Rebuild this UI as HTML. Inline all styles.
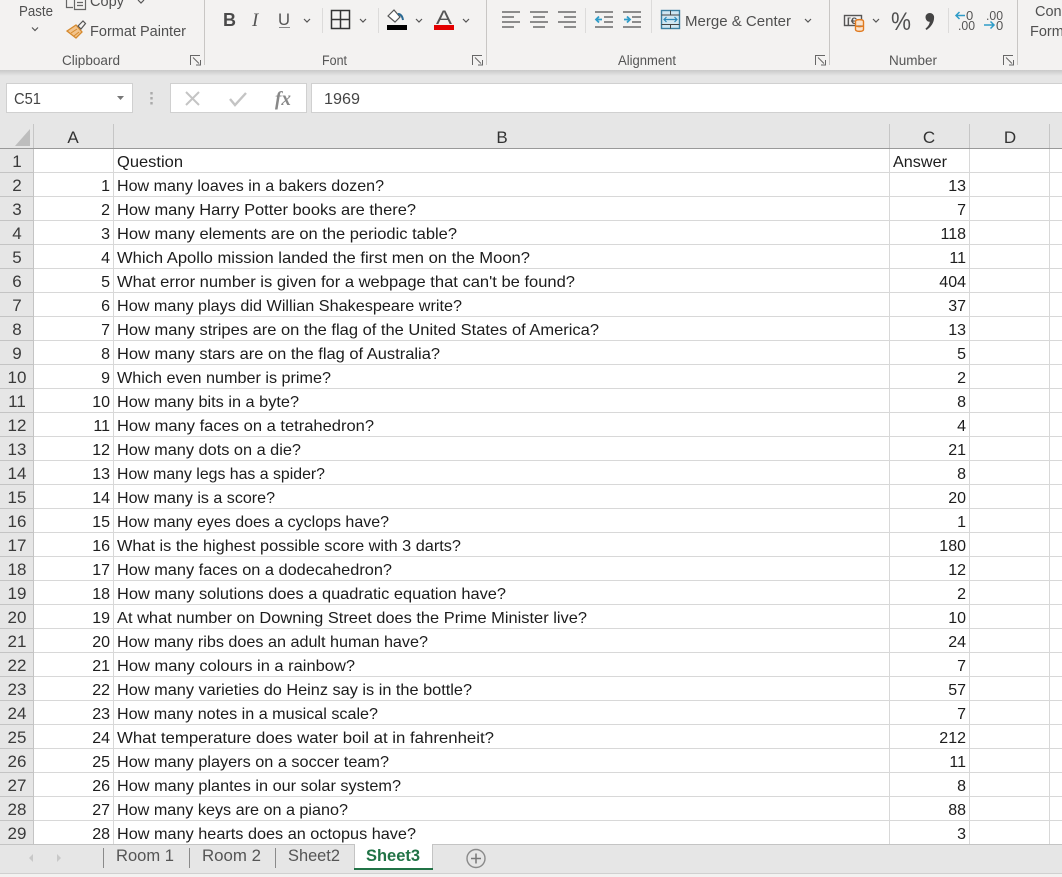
<!DOCTYPE html>
<html><head><meta charset="utf-8"><style>
html,body{margin:0;padding:0;background:#e6e6e6;width:1062px;height:877px;overflow:hidden}
svg{display:block}
text{font-family:"Liberation Sans",sans-serif;font-size:16px;fill:#1c1c1c}
.r text{fill:#3a3a3a;font-size:17px}
.a text{text-anchor:end}
.h text{text-anchor:middle;fill:#333}
.rib{font-size:14.5px;fill:#505050}
.lbl{font-size:13.5px;fill:#555}
.tab{font-size:17px;fill:#555}
.ch{fill:none;stroke:#555;stroke-width:1.2}
</style></head><body>
<svg width="1062" height="877" viewBox="0 0 1062 877" xmlns="http://www.w3.org/2000/svg">
<defs><linearGradient id="sh" x1="0" y1="0" x2="0" y2="1"><stop offset="0" stop-color="#c9c9c9"/><stop offset="1" stop-color="#e6e6e6"/></linearGradient></defs>
<rect width="1062" height="877" fill="#e6e6e6"/>
<rect width="1062" height="70" fill="#f3f2f1"/>
<rect y="70" width="1062" height="6" fill="url(#sh)"/>

<!-- dividers -->
<g stroke="#c8c6c4" fill="none">
<path d="M204.5 0V65M486.5 0V65M829.5 0V65M1017.5 0V65"/>
<path d="M322.5 8V33M378.5 8V33M585.5 8V33M651.5 0V33M948.5 8V33" stroke="#dcdbda"/>
</g>

<!-- Clipboard -->
<text class="rib" x="19" y="16" textLength="34" lengthAdjust="spacingAndGlyphs">Paste</text>
<path class="ch" d="M32 27.5l3 3 3-3"/>
<path d="M66.5 0V7.5H73M74.5 0V9.5H85.5V0M77 2.5h6M77 5.5h6" fill="none" stroke="#666" stroke-width="1.2"/>
<text class="rib" x="90" y="6" textLength="34" lengthAdjust="spacingAndGlyphs">Copy</text>
<path class="ch" d="M138 0l3 3 3-3"/>
<path d="M67 31l9-6 6 7-6 6z" fill="#f2c48d" stroke="#d68a2e" stroke-width="1.3"/>
<path d="M71 33l6-4M74 36l5-4" stroke="#d68a2e" fill="none"/>
<path d="M78 26l5-5 2.500 2.500-4.500 5.500z" fill="#f3f2f1" stroke="#555" stroke-width="1.2"/>
<text class="rib" x="90" y="36" textLength="96" lengthAdjust="spacingAndGlyphs">Format Painter</text>
<text class="lbl" x="62" y="65" textLength="58" lengthAdjust="spacingAndGlyphs">Clipboard</text>
<path id="lau" d="M190.500 65V55.500H200M196 65H200.500V60M193 57.500l6 6" fill="none" stroke="#666"/>

<!-- Font -->
<text x="223" y="26" style="font-size:18px;font-weight:bold;fill:#4a4a4a">B</text>
<text x="252" y="26" style="font-family:'Liberation Serif',serif;font-size:19px;font-style:italic;fill:#555">I</text>
<text x="278" y="25" style="font-size:17px;fill:#555" textLength="12" lengthAdjust="spacingAndGlyphs">U</text>
<path d="M279 27.500h11" stroke="#888" fill="none"/>
<path class="ch" d="M304 19l3 3 3-3M360 19l3 3 3-3M416 19l3 3 3-3M463 19l3 3 3-3"/>
<path d="M331.500 10.500h18v18h-18zM340.500 10.500v18M331.500 19.500h18" fill="none" stroke="#333" stroke-width="1.500"/>
<path d="M388 16l6-6 6 7-5 5z" fill="#fff" stroke="#555" stroke-width="1.200"/>
<path d="M398 14q4 0 5 6" stroke="#2b6a94" stroke-width="2" fill="none"/>
<rect x="387" y="25" width="20" height="5" fill="#000"/>
<text x="436" y="24" style="font-size:19px;fill:#555" textLength="16" lengthAdjust="spacingAndGlyphs">A</text>
<rect x="434" y="25" width="20" height="5" fill="#e30000"/>
<text class="lbl" x="322" y="65" textLength="25" lengthAdjust="spacingAndGlyphs">Font</text>
<use href="#lau" x="282"/>

<!-- Alignment -->
<g stroke="#6a6a6a" stroke-width="1.600" fill="none">
<path d="M502 12h18M502 17h12M502 22h18M502 27h12"/>
<path d="M530 12h18M533 17h12M530 22h18M533 27h12"/>
<path d="M558 12h18M564 17h12M558 22h18M564 27h12"/>
<path d="M595 12h18M604 17h9M604 22h9M595 27h18"/>
<path d="M623 12h18M632 17h9M632 22h9M623 27h18"/>
</g>
<path d="M602 19.500h-6m3-3l-3 3 3 3M624 19.500h6m-3-3l3 3-3 3" fill="none" stroke="#2f9cc8" stroke-width="1.800"/>
<rect x="661.500" y="10.500" width="18" height="18" fill="#cfe6f2" stroke="#3a7ea0" stroke-width="1.400"/>
<path d="M661.500 15h18M661.500 24.500h18M670.500 10.500v4.500M670.500 24.500v4" stroke="#444" fill="none"/>
<path d="M664 19.500h13M666.500 17l-2.500 2.500 2.500 2.500M674.500 17l2.500 2.500-2.500 2.500" stroke="#2b88b8" fill="none" stroke-width="1.200"/>
<text class="rib" x="685" y="26" textLength="106" lengthAdjust="spacingAndGlyphs">Merge &amp; Center</text>
<path class="ch" d="M805 19l3 3 3-3"/>
<text class="lbl" x="618" y="65" textLength="58" lengthAdjust="spacingAndGlyphs">Alignment</text>
<use href="#lau" x="625"/>

<!-- Number -->
<rect x="844.500" y="15.500" width="17" height="10" fill="#f3f2f1" stroke="#555" stroke-width="1.400"/>
<text x="847" y="24" style="font-size:9.500px;font-weight:bold;fill:#555" textLength="10" lengthAdjust="spacingAndGlyphs">[€</text>
<path d="M855.500 21.500c0-2.500 8-2.500 8 0v8c0 2.500-8 2.500-8 0zM855.500 25.500c1.500 1.500 6.500 1.500 8 0" fill="#fbe3cc" stroke="#e07a1f" stroke-width="1.400"/>
<path class="ch" d="M873 19l3 3 3-3"/>
<text x="891" y="30" style="font-size:25px;fill:#505050" textLength="20" lengthAdjust="spacingAndGlyphs">%</text>
<path d="M925.500 17a4.300 4.300 0 1 1 8.600 .5c0 5-3 9.500-7.500 12.500l-1.200-1.300c2.600-2.200 4-4.300 4.400-7-2.500 .4-4.300-2-4.300-4.700z" fill="#444"/>
<text x="966" y="20" style="font-size:13px;fill:#555">0</text>
<text x="958" y="30" style="font-size:13px;fill:#555" textLength="17" lengthAdjust="spacingAndGlyphs">.00</text>
<path d="M965 15.500h-9m3.500-3.500l-3.500 3.500 3.500 3.500" fill="none" stroke="#2f9cc8" stroke-width="1.500"/>
<text x="986" y="20" style="font-size:13px;fill:#555" textLength="17" lengthAdjust="spacingAndGlyphs">.00</text>
<text x="996" y="30" style="font-size:13px;fill:#555">0</text>
<path d="M984 25h10m-3.500-3.500l3.500 3.500-3.500 3.500" fill="none" stroke="#2f9cc8" stroke-width="1.500"/>
<text class="lbl" x="889" y="65" textLength="48" lengthAdjust="spacingAndGlyphs">Number</text>
<use href="#lau" x="813"/>
<text class="rib" x="1035" y="16">Con</text>
<text class="rib" x="1030" y="36">Form</text>

<!-- Formula bar -->
<rect x="6.500" y="83.500" width="126" height="29" fill="#fff" stroke="#d0d0d0"/>
<text x="14" y="104" style="fill:#444" textLength="27" lengthAdjust="spacingAndGlyphs">C51</text>
<path d="M117 96h7l-3.500 4z" fill="#777"/>
<path d="M151.500 92v2.500M151.500 97v2.500M151.500 102v2.500" stroke="#aaa" stroke-width="2.400" fill="none"/>
<rect x="170.500" y="83.500" width="136" height="29" fill="#fff" stroke="#d0d0d0"/>
<path d="M186 92l13 13M199 92l-13 13" stroke="#c4c4c4" stroke-width="2" fill="none"/>
<path d="M230 99l5 6 11-12" stroke="#c4c4c4" stroke-width="2.400" fill="none"/>
<text x="275" y="105" style="font-family:'Liberation Serif',serif;font-style:italic;font-weight:bold;font-size:20px;fill:#888" textLength="16" lengthAdjust="spacingAndGlyphs">fx</text>
<rect x="311.500" y="83.500" width="760" height="29" fill="#fff" stroke="#d0d0d0"/>
<text x="324" y="104" style="fill:#444" textLength="36" lengthAdjust="spacingAndGlyphs">1969</text>

<!-- Column headers -->
<path d="M30 129V146H15z" fill="#bdbdbd"/>
<g class="h">
<text x="73" y="143" style="font-size:17px">A</text>
<text x="502" y="143" style="font-size:17px">B</text>
<text x="929" y="143" style="font-size:17px">C</text>
<text x="1010" y="143" style="font-size:17px">D</text>
</g>
<g stroke="#c6c6c6" fill="none"><path d="M33.500 124V149M113.500 124V149M889.500 124V149M969.500 124V149M1049.500 124V149"/></g>

<!-- Grid -->
<rect x="34" y="149" width="1028" height="695" fill="#fff"/>
<g stroke="#d8d8d8" fill="none">
<path d="M34 172.500H1062M34 196.500H1062M34 220.500H1062M34 244.500H1062M34 268.500H1062M34 292.500H1062M34 316.500H1062M34 340.500H1062M34 364.500H1062M34 388.500H1062M34 412.500H1062M34 436.500H1062M34 460.500H1062M34 484.500H1062M34 508.500H1062M34 532.500H1062M34 556.500H1062M34 580.500H1062M34 604.500H1062M34 628.500H1062M34 652.500H1062M34 676.500H1062M34 700.500H1062M34 724.500H1062M34 748.500H1062M34 772.500H1062M34 796.500H1062M34 820.500H1062"/>
<path d="M113.500 149V844M889.500 149V844M969.500 149V844M1049.500 149V844"/>
</g>
<g stroke="#c4c4c4" fill="none">
<path d="M0 172.500H33M0 196.500H33M0 220.500H33M0 244.500H33M0 268.500H33M0 292.500H33M0 316.500H33M0 340.500H33M0 364.500H33M0 388.500H33M0 412.500H33M0 436.500H33M0 460.500H33M0 484.500H33M0 508.500H33M0 532.500H33M0 556.500H33M0 580.500H33M0 604.500H33M0 628.500H33M0 652.500H33M0 676.500H33M0 700.500H33M0 724.500H33M0 748.500H33M0 772.500H33M0 796.500H33M0 820.500H33"/>
<path d="M33.500 149V844"/>
</g>
<path d="M0 148.500H1062" stroke="#999" fill="none"/>

<!-- Row headers -->
<g class="r" style="text-anchor:middle">
<text x="17" y="167">1</text><text x="17" y="191">2</text><text x="17" y="215">3</text><text x="17" y="239">4</text><text x="17" y="263">5</text><text x="17" y="287">6</text><text x="17" y="311">7</text><text x="17" y="335">8</text><text x="17" y="359">9</text><text x="17" y="383">10</text><text x="17" y="407">11</text><text x="17" y="431">12</text><text x="17" y="455">13</text><text x="17" y="479">14</text><text x="17" y="503">15</text><text x="17" y="527">16</text><text x="17" y="551">17</text><text x="17" y="575">18</text><text x="17" y="599">19</text><text x="17" y="623">20</text><text x="17" y="647">21</text><text x="17" y="671">22</text><text x="17" y="695">23</text><text x="17" y="719">24</text><text x="17" y="743">25</text><text x="17" y="767">26</text><text x="17" y="791">27</text><text x="17" y="815">28</text><text x="17" y="839">29</text>
</g>

<!-- Column A -->
<g class="a">
<text x="110" y="191">1</text><text x="110" y="215">2</text><text x="110" y="239">3</text><text x="110" y="263">4</text><text x="110" y="287">5</text><text x="110" y="311">6</text><text x="110" y="335">7</text><text x="110" y="359">8</text><text x="110" y="383">9</text><text x="110" y="407">10</text><text x="110" y="431">11</text><text x="110" y="455">12</text><text x="110" y="479">13</text><text x="110" y="503">14</text><text x="110" y="527">15</text><text x="110" y="551">16</text><text x="110" y="575">17</text><text x="110" y="599">18</text><text x="110" y="623">19</text><text x="110" y="647">20</text><text x="110" y="671">21</text><text x="110" y="695">22</text><text x="110" y="719">23</text><text x="110" y="743">24</text><text x="110" y="767">25</text><text x="110" y="791">26</text><text x="110" y="815">27</text><text x="110" y="839">28</text>
</g>

<!-- Column B -->
<g>
<text x="117" y="167" lengthAdjust="spacingAndGlyphs" textLength="66">Question</text>
<text x="117" y="191" lengthAdjust="spacingAndGlyphs" textLength="267">How many loaves in a bakers dozen?</text>
<text x="117" y="215" lengthAdjust="spacingAndGlyphs" textLength="299">How many Harry Potter books are there?</text>
<text x="117" y="239" lengthAdjust="spacingAndGlyphs" textLength="340">How many elements are on the periodic table?</text>
<text x="117" y="263" lengthAdjust="spacingAndGlyphs" textLength="413">Which Apollo mission landed the first men on the Moon?</text>
<text x="117" y="287" lengthAdjust="spacingAndGlyphs" textLength="458">What error number is given for a webpage that can't be found?</text>
<text x="117" y="311" lengthAdjust="spacingAndGlyphs" textLength="345">How many plays did Willian Shakespeare write?</text>
<text x="117" y="335" lengthAdjust="spacingAndGlyphs" textLength="482">How many stripes are on the flag of the United States of America?</text>
<text x="117" y="359" lengthAdjust="spacingAndGlyphs" textLength="323">How many stars are on the flag of Australia?</text>
<text x="117" y="383" lengthAdjust="spacingAndGlyphs" textLength="214">Which even number is prime?</text>
<text x="117" y="407" lengthAdjust="spacingAndGlyphs" textLength="182">How many bits in a byte?</text>
<text x="117" y="431" lengthAdjust="spacingAndGlyphs" textLength="257">How many faces on a tetrahedron?</text>
<text x="117" y="455" lengthAdjust="spacingAndGlyphs" textLength="184">How many dots on a die?</text>
<text x="117" y="479" lengthAdjust="spacingAndGlyphs" textLength="208">How many legs has a spider?</text>
<text x="117" y="503" lengthAdjust="spacingAndGlyphs" textLength="158">How many is a score?</text>
<text x="117" y="527" lengthAdjust="spacingAndGlyphs" textLength="272">How many eyes does a cyclops have?</text>
<text x="117" y="551" lengthAdjust="spacingAndGlyphs" textLength="344">What is the highest possible score with 3 darts?</text>
<text x="117" y="575" lengthAdjust="spacingAndGlyphs" textLength="275">How many faces on a dodecahedron?</text>
<text x="117" y="599" lengthAdjust="spacingAndGlyphs" textLength="389">How many solutions does a quadratic equation have?</text>
<text x="117" y="623" lengthAdjust="spacingAndGlyphs" textLength="470">At what number on Downing Street does the Prime Minister live?</text>
<text x="117" y="647" lengthAdjust="spacingAndGlyphs" textLength="311">How many ribs does an adult human have?</text>
<text x="117" y="671" lengthAdjust="spacingAndGlyphs" textLength="238">How many colours in a rainbow?</text>
<text x="117" y="695" lengthAdjust="spacingAndGlyphs" textLength="355">How many varieties do Heinz say is in the bottle?</text>
<text x="117" y="719" lengthAdjust="spacingAndGlyphs" textLength="261">How many notes in a musical scale?</text>
<text x="117" y="743" lengthAdjust="spacingAndGlyphs" textLength="377">What temperature does water boil at in fahrenheit?</text>
<text x="117" y="767" lengthAdjust="spacingAndGlyphs" textLength="272">How many players on a soccer team?</text>
<text x="117" y="791" lengthAdjust="spacingAndGlyphs" textLength="284">How many plantes in our solar system?</text>
<text x="117" y="815" lengthAdjust="spacingAndGlyphs" textLength="231">How many keys are on a piano?</text>
<text x="117" y="839" lengthAdjust="spacingAndGlyphs" textLength="299">How many hearts does an octopus have?</text>
</g>

<!-- Column C -->
<text x="893" y="167" lengthAdjust="spacingAndGlyphs" textLength="54">Answer</text>
<g class="a">
<text x="966" y="191">13</text><text x="966" y="215">7</text><text x="966" y="239">118</text><text x="966" y="263">11</text><text x="966" y="287">404</text><text x="966" y="311">37</text><text x="966" y="335">13</text><text x="966" y="359">5</text><text x="966" y="383">2</text><text x="966" y="407">8</text><text x="966" y="431">4</text><text x="966" y="455">21</text><text x="966" y="479">8</text><text x="966" y="503">20</text><text x="966" y="527">1</text><text x="966" y="551">180</text><text x="966" y="575">12</text><text x="966" y="599">2</text><text x="966" y="623">10</text><text x="966" y="647">24</text><text x="966" y="671">7</text><text x="966" y="695">57</text><text x="966" y="719">7</text><text x="966" y="743">212</text><text x="966" y="767">11</text><text x="966" y="791">8</text><text x="966" y="815">88</text><text x="966" y="839">3</text>
</g>

<!-- Tab bar -->
<rect y="844" width="1062" height="29" fill="#e6e6e6"/>
<path d="M0 844.500H354M433 844.500H1062" stroke="#c4c4c4" fill="none"/>
<rect y="873" width="1062" height="4" fill="#f3f2f1"/>
<path d="M0 873.500H1062" stroke="#d0d0d0" fill="none"/>
<path d="M33 854l-4 4 4 4z" fill="#c8c8c8"/>
<path d="M57 854l4 4-4 4z" fill="#c8c8c8"/>
<path d="M103.500 848V868M189.500 848V868M275.500 848V868" stroke="#8a8a8a" fill="none"/>
<text class="tab" x="116" y="861" textLength="58" lengthAdjust="spacingAndGlyphs">Room 1</text>
<text class="tab" x="202" y="861" textLength="59" lengthAdjust="spacingAndGlyphs">Room 2</text>
<text class="tab" x="288" y="861" textLength="52" lengthAdjust="spacingAndGlyphs">Sheet2</text>
<rect x="354" y="844" width="79" height="25" fill="#fff"/>
<path d="M354.500 844V869M432.500 844V869" stroke="#c4c4c4" fill="none"/>
<rect x="354" y="868" width="79" height="2" fill="#217346"/>
<text x="366" y="861" textLength="54" lengthAdjust="spacingAndGlyphs" style="font-size:17px;font-weight:bold;fill:#217346">Sheet3</text>
<circle cx="476" cy="858.500" r="9" fill="none" stroke="#8a8a8a" stroke-width="1.400"/>
<path d="M471 858.500h10M476 853.500v10" stroke="#777" stroke-width="1.500" fill="none"/>
</svg>
</body></html>
